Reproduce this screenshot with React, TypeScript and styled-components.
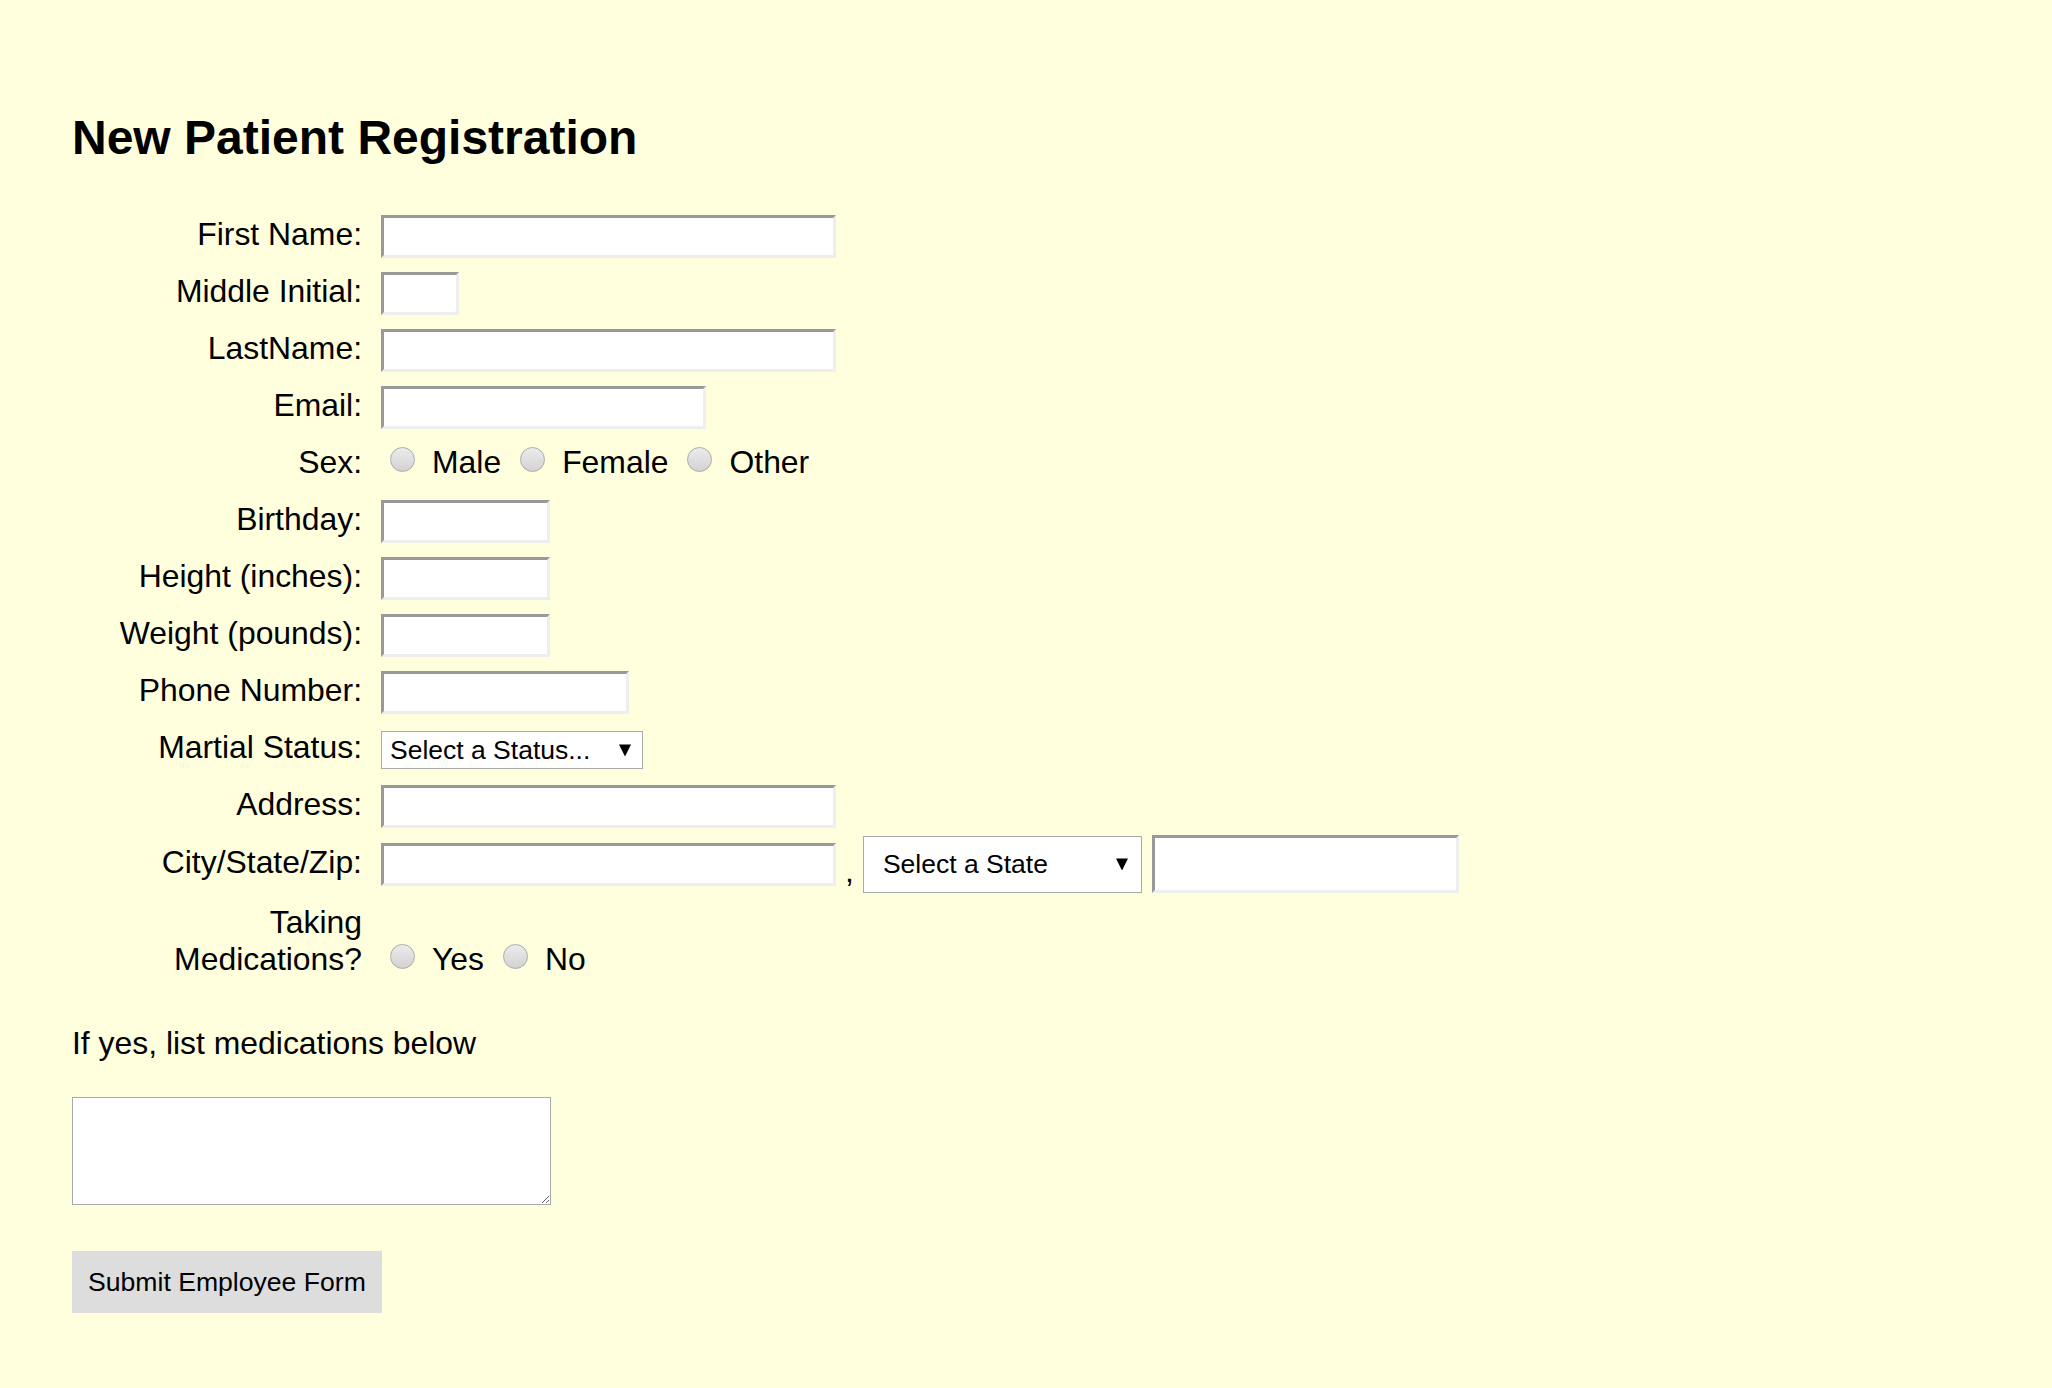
import styled, {createGlobalStyle} from 'styled-components';

const GlobalStyle = createGlobalStyle`
  html, body {
    margin: 0;
    background: #ffffdd;
  }
  body {
    font-family: "Liberation Sans", Arial, sans-serif;
    color: #000;
  }
`;

const Page = styled.main`
  padding: 110px 0 80px 72px;
  font-size: 31.9px;
`;

const Title = styled.h1`
  margin: 0;
  font-size: 48px;
  font-weight: bold;
  line-height: normal;
`;

const Fields = styled.div`
  margin: 43px 0 0 20px;
`;

const Label = styled.label`
  text-align: right;
  line-height: 37px;
`;

const Options = styled.div`
  display: flex;
  align-items: center;
  gap: 10px;
  line-height: 37px;
`;

const Row = styled.div<{$end?: boolean}>`
  display: grid;
  grid-template-columns: 270px 1fr;
  column-gap: 19px;
  min-height: 57px;
  align-items: ${(p) => (p.$end ? 'end' : 'center')};
  padding-top: ${(p) => (p.$end ? '11px' : '0')};

  ${Label}, ${Options} {
    margin-bottom: ${(p) => (p.$end ? '0' : '4px')};
  }
`;

const Field = styled.div`
  display: flex;
  align-items: center;
  line-height: 37px;
`;

const TextInput = styled.input<{$w: number; $h?: number}>`
  box-sizing: border-box;
  width: ${(p) => p.$w}px;
  height: ${(p) => p.$h ?? 43}px;
  margin: 0;
  padding: 0 6px;
  background: #fff;
  border-style: solid;
  border-width: 3px;
  border-color: #999 #eee #eee #999;
  font: inherit;
  font-size: 26px;
  outline: none;
`;

const Option = styled.label`
  display: flex;
  align-items: center;
`;

const Radio = styled.input`
  appearance: none;
  box-sizing: border-box;
  width: 25px;
  height: 25px;
  margin: -6px 17px 0 9px;
  border-radius: 50%;
  border: 1px solid #ababab;
  background: linear-gradient(#ececec, #d2d2d2);
`;

const SelectWrap = styled.div`
  position: relative;
  display: inline-flex;
`;

const Select = styled.select<{$w: number; $h: number; $pad: number}>`
  appearance: none;
  box-sizing: border-box;
  width: ${(p) => p.$w}px;
  height: ${(p) => p.$h}px;
  margin: 0;
  padding: 0 0 0 ${(p) => p.$pad}px;
  border: 1px solid #a9a9a9;
  border-radius: 0;
  background: #fff;
  color: #000;
  font-family: "Liberation Sans", Arial, sans-serif;
  font-size: 26.5px;
  outline: none;
`;

const Arrow = styled.svg<{$right: number}>`
  position: absolute;
  top: 50%;
  right: ${(p) => p.$right}px;
  width: 12px;
  height: 13px;
  transform: translateY(-50%);
  pointer-events: none;
`;

const Comma = styled.span`
  margin: 0 9px 0 9px;
  align-self: flex-end;
  line-height: 44px;
`;

const Note = styled.p`
  margin: 47px 0 0;
  line-height: 37px;
`;

const Meds = styled.textarea`
  display: block;
  box-sizing: border-box;
  width: 479px;
  height: 108px;
  margin: 35px 0 0;
  border: 1px solid #a9a9a9;
  background: #fff;
  font: inherit;
  font-size: 22px;
  outline: none;
`;

const Submit = styled.button`
  display: block;
  margin-top: 46px;
  height: 62px;
  padding: 0 16px;
  border: none;
  background: #dddddd;
  color: #000;
  font-family: "Liberation Sans", Arial, sans-serif;
  font-size: 26.6px;
`;

const DownArrow = ({right}: {right: number}) => (
  <Arrow $right={right} viewBox="0 0 12 13">
    <polygon points="0,1 12,1 6,13" fill="#000" />
  </Arrow>
);

const App = () => {
  return (
    <Page>
      <GlobalStyle />
      <Title>New Patient Registration</Title>
      <form>
        <Fields>
          <Row>
            <Label htmlFor="first">First Name:</Label>
            <Field>
              <TextInput id="first" $w={455} />
            </Field>
          </Row>
          <Row>
            <Label htmlFor="middle">Middle Initial:</Label>
            <Field>
              <TextInput id="middle" $w={78} />
            </Field>
          </Row>
          <Row>
            <Label htmlFor="last">LastName:</Label>
            <Field>
              <TextInput id="last" $w={455} />
            </Field>
          </Row>
          <Row>
            <Label htmlFor="email">Email:</Label>
            <Field>
              <TextInput id="email" $w={325} />
            </Field>
          </Row>
          <Row>
            <Label>Sex:</Label>
            <Options>
              <Option>
                <Radio type="radio" name="sex" />
                Male
              </Option>
              <Option>
                <Radio type="radio" name="sex" />
                Female
              </Option>
              <Option>
                <Radio type="radio" name="sex" />
                Other
              </Option>
            </Options>
          </Row>
          <Row>
            <Label htmlFor="bday">Birthday:</Label>
            <Field>
              <TextInput id="bday" $w={169} />
            </Field>
          </Row>
          <Row>
            <Label htmlFor="height">Height (inches):</Label>
            <Field>
              <TextInput id="height" $w={169} />
            </Field>
          </Row>
          <Row>
            <Label htmlFor="weight">Weight (pounds):</Label>
            <Field>
              <TextInput id="weight" $w={169} />
            </Field>
          </Row>
          <Row>
            <Label htmlFor="phone">Phone Number:</Label>
            <Field>
              <TextInput id="phone" $w={248} />
            </Field>
          </Row>
          <Row>
            <Label htmlFor="status">Martial Status:</Label>
            <Field>
              <SelectWrap>
                <Select id="status" $w={262} $h={38} $pad={8} defaultValue="">
                  <option value="">Select a Status...</option>
                  <option>Single</option>
                  <option>Married</option>
                  <option>Divorced</option>
                  <option>Widowed</option>
                </Select>
                <DownArrow right={12} />
              </SelectWrap>
            </Field>
          </Row>
          <Row>
            <Label htmlFor="address">Address:</Label>
            <Field>
              <TextInput id="address" $w={455} />
            </Field>
          </Row>
          <Row>
            <Label htmlFor="city">City/State/Zip:</Label>
            <Field>
              <TextInput id="city" $w={455} />
              <Comma>,</Comma>
              <SelectWrap>
                <Select $w={279} $h={57} $pad={19} defaultValue="">
                  <option value="">Select a State</option>
                  <option>Alabama</option>
                  <option>Alaska</option>
                  <option>Arizona</option>
                  <option>California</option>
                  <option>New York</option>
                  <option>Texas</option>
                </Select>
                <DownArrow right={14} />
              </SelectWrap>
              <TextInput $w={307} $h={58} style={{marginLeft: 10}} />
            </Field>
          </Row>
          <Row $end>
            <Label>Taking Medications?</Label>
            <Options>
              <Option>
                <Radio type="radio" name="meds" />
                Yes
              </Option>
              <Option>
                <Radio type="radio" name="meds" />
                No
              </Option>
            </Options>
          </Row>
        </Fields>
        <Note>If yes, list medications below</Note>
        <Meds />
        <Submit type="button">Submit Employee Form</Submit>
      </form>
    </Page>
  );
};

export default App;
